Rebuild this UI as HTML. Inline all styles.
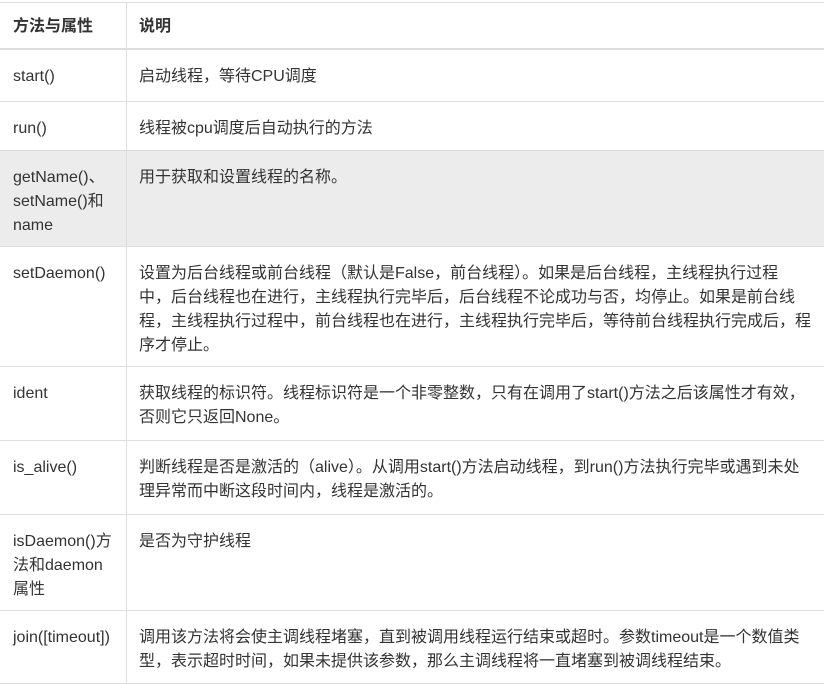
<!DOCTYPE html>
<html><head><meta charset="utf-8"><style>
body{margin:0;width:824px;height:684px;overflow:hidden;background:#fff;font-family:"Liberation Sans","Noto Sans CJK SC",sans-serif;font-size:16px;color:#333;}
.r{position:absolute;left:0;width:824px;border-top:1px solid #ddd;box-sizing:border-box;}
.c1{position:absolute;left:13px;top:15px;line-height:24px;white-space:nowrap;}
.c2{position:absolute;left:139px;top:15px;line-height:24px;white-space:nowrap;}
.v{position:absolute;left:126px;top:2px;width:1px;height:682px;background:#ddd;}
.g{background:#ececec;}
</style></head><body>
<div class="r" style="top:2px;height:48px;border-bottom:2px solid #ddd;font-weight:bold"><div class="c1" style="top:12px">方法与属性</div><div class="c2" style="top:12px">说明</div></div>
<div class="r" style="top:50px;height:51px;border-top:none"><div class="c1">start()</div><div class="c2">启动线程，等待CPU调度</div></div>
<div class="r" style="top:101px;height:49px"><div class="c1">run()</div><div class="c2">线程被cpu调度后自动执行的方法</div></div>
<div class="r g" style="top:150px;height:96px"><div class="c1">getName()、<br>setName()和<br>name</div><div class="c2">用于获取和设置线程的名称。</div></div>
<div class="r" style="top:246px;height:120px"><div class="c1">setDaemon()</div><div class="c2">设置为后台线程或前台线程（默认是False，前台线程）。如果是后台线程，主线程执行过程<br>中，后台线程也在进行，主线程执行完毕后，后台线程不论成功与否，均停止。如果是前台线<br>程，主线程执行过程中，前台线程也在进行，主线程执行完毕后，等待前台线程执行完成后，程<br>序才停止。</div></div>
<div class="r" style="top:366px;height:74px"><div class="c1">ident</div><div class="c2">获取线程的标识符。线程标识符是一个非零整数，只有在调用了start()方法之后该属性才有效，<br>否则它只返回None。</div></div>
<div class="r" style="top:440px;height:74px"><div class="c1">is_alive()</div><div class="c2">判断线程是否是激活的（alive）。从调用start()方法启动线程，到run()方法执行完毕或遇到未处<br>理异常而中断这段时间内，线程是激活的。</div></div>
<div class="r" style="top:514px;height:96px"><div class="c1">isDaemon()方<br>法和daemon<br>属性</div><div class="c2">是否为守护线程</div></div>
<div class="r" style="top:610px;height:74px;border-bottom:1px solid #ddd"><div class="c1">join([timeout])</div><div class="c2">调用该方法将会使主调线程堵塞，直到被调用线程运行结束或超时。参数timeout是一个数值类<br>型，表示超时时间，如果未提供该参数，那么主调线程将一直堵塞到被调线程结束。</div></div>
<div class="v"></div>
</body></html>
